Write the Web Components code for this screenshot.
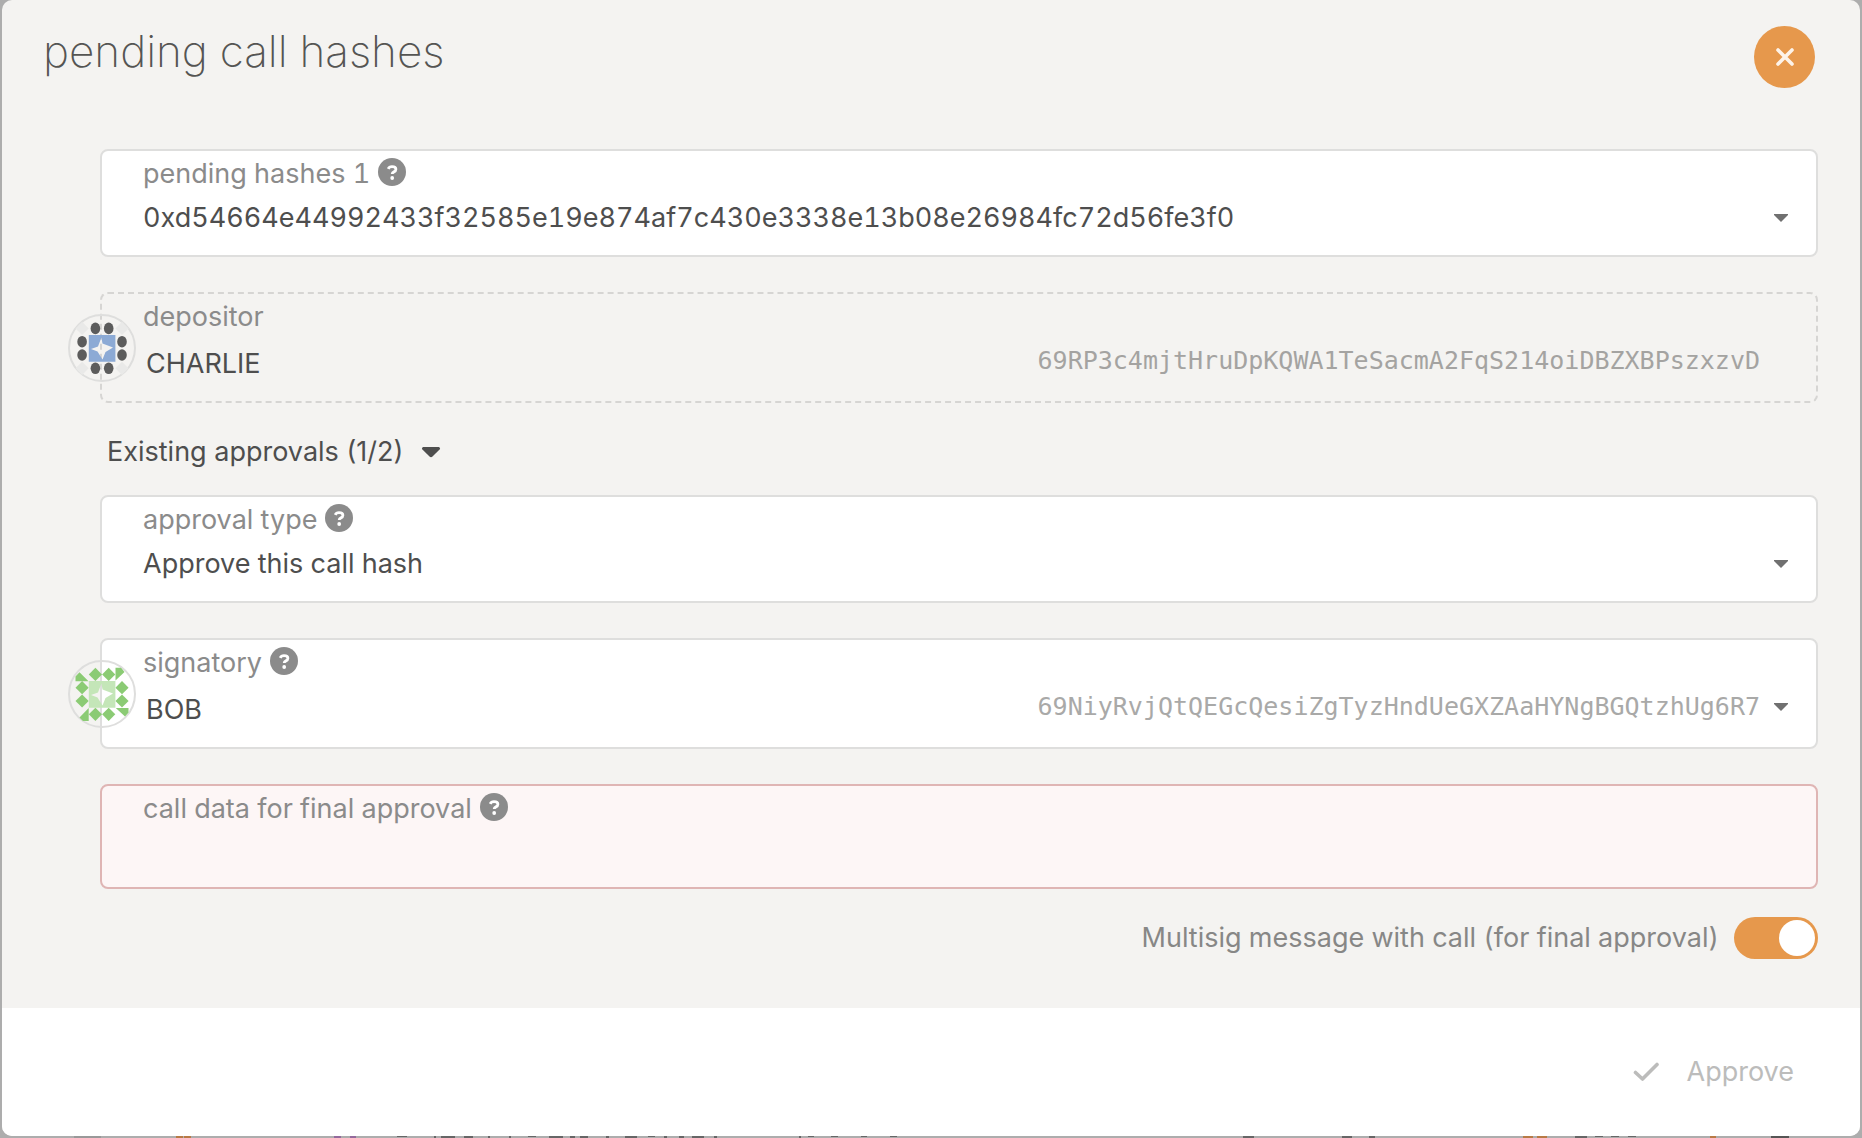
<!DOCTYPE html>
<html lang="en">
<head>
<meta charset="utf-8">
<title>pending call hashes</title>
<style>
html, body { margin: 0; min-height: 100%; }
body { background: #adadad; font-family: Inter, "Liberation Sans", sans-serif; font-size: 27px; line-height: 40px; font-variant-numeric: tabular-nums; color: #4e4e4e; }
</style>
</head>
<body>
<call-modal></call-modal>

<template id="t-modal">
  <style>
    :host { display: flex; flex-direction: column; min-height: 100vh; }
    dialog { all: unset; box-sizing: border-box; display: flex; flex-direction: column; flex: 1; margin: 0 2px; border-radius: 10px; overflow: hidden; background: #f4f3f1; }
    header { display: flex; justify-content: space-between; align-items: flex-start; padding: 26px 45px 0 41px; height: 123px; box-sizing: border-box; }
    h1 { margin: 0; font-size: 44px; line-height: 50px; font-weight: 200; color: #555553; }
    main { flex: 1; display: flex; flex-direction: column; gap: 35px; padding: 26px 42px 43px 98px; }
    details { margin: 0 0 0 7px; line-height: 40px; height: 22px; }
    summary { list-style: none; display: flex; align-items: center; gap: 18px; margin-top: -6px; font-variant-numeric: normal; }
    summary svg { width: 20px; height: 12px; }
    footer { background: #fff; display: flex; justify-content: flex-end; padding: 44px 66px; }
    .stack { display: flex; flex-direction: column; gap: 22px; }
  </style>
  <dialog open aria-labelledby="title">
    <header>
      <h1 id="title">pending call hashes</h1>
      <close-button></close-button>
    </header>
    <main>
      <form-field label="pending hashes 1" help control="select" value="0xd54664e44992433f32585e19e874af7c430e3338e13b08e26984fc72d56fe3f0"></form-field>
      <form-field label="depositor" control="output" kind="account" value="CHARLIE" address="69RP3c4mjtHruDpKQWA1TeSacmA2FqS214oiDBZXBPszxzvD">
        <identity-icon slot="icon" pattern="dots"></identity-icon>
      </form-field>
      <details>
        <summary>Existing approvals (1/2)
          <svg viewBox="0 0 20 12" aria-hidden="true"><path d="M2 1h16q2 1 .6 2.600L11.500 10.500q-1.500 1.300-3 0L1.400 3.600Q0 2 2 1z" fill="#4e4e4e"/></svg>
        </summary>
      </details>
      <form-field label="approval type" help control="select" value="Approve this call hash"></form-field>
      <form-field label="signatory" help control="select" kind="account" value="BOB" address="69NiyRvjQtQEGcQesiZgTyzHndUeGXZAaHYNgBGQtzhUg6R7">
        <identity-icon slot="icon" pattern="diamonds"></identity-icon>
      </form-field>
      <div class="stack">
        <form-field label="call data for final approval" help control="input" kind="error" value=""></form-field>
        <toggle-switch>Multisig message with call (for final approval)</toggle-switch>
      </div>
    </main>
    <footer><approve-button>Approve</approve-button></footer>
  </dialog>
  <page-behind></page-behind>
</template>

<template id="t-close">
  <style>
    :host { display: block; }
    button { display: grid; place-items: center; width: 61px; height: 62px; padding: 0; border: 0; border-radius: 50%; background: #e6984c; cursor: pointer; }
    svg { width: 20px; height: 20px; }
  </style>
  <button type="button" aria-label="Close"><svg viewBox="0 0 20 20"><path d="M3 3L17 17M17 3L3 17" stroke="#fdf3e9" stroke-width="3.600" stroke-linecap="round"/></svg></button>
</template>

<template id="t-field">
  <style>
    :host { display: block; }
    .box { position: relative; box-sizing: border-box; height: 108px; border: 2px solid #dededd; border-radius: 8px; background: #fff; padding: 2px 0 0 41px; }
    .head { display: flex; align-items: center; gap: 8px; height: 42px; color: #8b8b8b; }
    .head svg { width: 28px; height: 28px; margin-bottom: 4px; }
    .row { display: flex; align-items: center; height: 46px; padding-right: 28px; }
    select, input, output { flex: 1; min-width: 0; height: 40px; padding: 0; border: 0; outline: 0; background: none; appearance: none; font: inherit; font-variant-numeric: inherit; color: #4e4e4e; line-height: 40px; opacity: 1; }
    .arrow { width: 14px; height: 8px; margin-left: 14px; }
    code { font-family: "DejaVu Sans Mono", monospace; font-size: 25px; color: #a9a9a8; }
    :host([kind="account"]) .box { height: 111px; }
    :host([kind="account"]) .row { padding-left: 3px; height: 52px; }
    :host([kind="account"]) code, :host([kind="account"]) .arrow { margin-bottom: 6px; }
    :host([control="output"]) .box { background: none; border: 2px dashed #d6d5d3; }
    :host([control="output"]) .row { padding-right: 56px; }
    :host([control="output"]) code { color: #a4a3a1; }
    :host([kind="error"]) .box { height: 105px; background: #fdf6f6; border-color: #dfb5b4; }
    ::slotted(*) { position: absolute; left: -34px; top: 20px; }
  </style>
  <div class="box">
    <slot name="icon"></slot>
    <div class="head"><label for="control"></label></div>
    <div class="row"></div>
  </div>
</template>

<template id="t-toggle">
  <style>
    :host { display: block; }
    label { display: flex; justify-content: flex-end; align-items: center; gap: 15px; height: 54px; color: #878786; }
    input { appearance: none; margin: 0; box-sizing: border-box; width: 84px; height: 42px; padding: 3px; border-radius: 21px; background: #e6984c; display: flex; justify-content: flex-end; }
    input::before { content: ""; width: 36px; height: 36px; border-radius: 50%; background: #fff; }
  </style>
  <label><slot></slot><input type="checkbox" checked></label>
</template>

<template id="t-approve">
  <style>
    :host { display: block; }
    button { display: flex; align-items: center; gap: 28px; border: 0; padding: 0; background: none; font: inherit; color: #bcbcbb; line-height: 40px; }
    svg { width: 26px; height: 22px; }
  </style>
  <button type="button" disabled><svg viewBox="0 0 26 22" fill="none"><path d="M2.500 11.500L9.500 18L24 3.500" stroke="#bcbcbb" stroke-width="3.600" stroke-linecap="round" stroke-linejoin="round"/></svg><slot></slot></button>
</template>

<template id="t-behind">
  <style>
    :host { display: block; height: 2px; }
    svg { display: block; width: 100%; height: 2px; }
  </style>
  <svg viewBox="0 0 1862 2" preserveAspectRatio="none" aria-hidden="true">
    <path d="M74 0h27v2h-27z" fill="#999"/>
    <path d="M397 0h10v1h-10zM434 0h2v2h-2zM441 0h14v2h-14zM464 0h9v2h-9zM488 0h2v2h-2zM509 0h2v2h-2zM528 0h8v1h-8zM549 0h14v2h-14zM570 0h5v2h-5zM580 0h8v2h-8zM606 0h3v2h-3zM625 0h12v2h-12zM648 0h7v1h-7zM664 0h3v2h-3zM679 0h5v2h-5zM692 0h12v2h-12zM714 0h3v2h-3zM799 0h2v2h-2zM808 0h6v1h-6zM831 0h7v1h-7zM861 0h6v1h-6zM890 0h7v1h-7zM1243 0h11v2h-11zM1342 0h10v2h-10zM1369 0h6v2h-6zM1575 0h12v2h-12zM1595 0h8v1h-8zM1611 0h8v1h-8zM1628 0h8v1h-8z" fill="#666"/>
    <path d="M1771 0h18v2h-18z" fill="#555"/>
    <path d="M176 0h7v2h-7zM184 0h7v2h-7zM1523 0h10v2h-10zM1537 0h10v2h-10zM1710 0h6v2h-6z" fill="#b87a45"/>
    <path d="M334 0h7v2h-7zM350 0h6v2h-6z" fill="#936a9c"/>
  </svg>
</template>

<script>
const stamp = (el, id) => {
  const root = el.attachShadow({ mode: 'open' });
  root.append(document.getElementById(id).content.cloneNode(true));
  return root;
};
const HELP = '<svg viewBox="0 0 28 28" role="img" aria-label="help"><circle cx="14" cy="14" r="14" fill="#8b8b8b"/><path d="M10.200 10.800Q11.200 8.600 14 8.600Q17.900 8.600 17.900 11.300Q17.900 13 15.900 13.900Q14.200 14.700 14.200 16.100" fill="none" stroke="#fff" stroke-width="2.800"/><circle cx="14.200" cy="20" r="1.900" fill="#fff"/></svg>';
const ARROW = '<svg class="arrow" viewBox="0 0 14 8" aria-hidden="true"><path d="M0 0H14V1L7 8L0 1Z" fill="#707070"/></svg>';

customElements.define('close-button', class extends HTMLElement {
  constructor() { super(); stamp(this, 't-close'); }
});
customElements.define('toggle-switch', class extends HTMLElement {
  constructor() { super(); stamp(this, 't-toggle'); }
});
customElements.define('approve-button', class extends HTMLElement {
  constructor() { super(); stamp(this, 't-approve'); }
});
customElements.define('page-behind', class extends HTMLElement {
  constructor() { super(); stamp(this, 't-behind'); }
});
customElements.define('identity-icon', class extends HTMLElement {
  connectedCallback() {
    if (this.shadowRoot) return;
    const dots = this.getAttribute('pattern') === 'dots';
    const cells = [[27.4, 14.4], [40.7, 14.4], [14.1, 27.7], [54, 27.7], [14.1, 41], [54, 41], [27.4, 54.3], [40.7, 54.3]];
    const diamond = (x, y, c) => `<path d="M${x} ${y - 6.6}l6.600 6.600l-6.600 6.600l-6.600-6.600z" fill="${c}"/>`;
    let art = cells.map(([x, y]) => dots ? `<ellipse cx="${x}" cy="${y}" rx="4.800" ry="5.800" fill="#5c5c5c"/>` : diamond(x, y, '#8bcb74')).join('');
    art += dots
      ? [[14.1, 14.4], [54, 14.4], [14.1, 54.3], [54, 54.3]].map(([x, y]) => diamond(x, y, '#e9e9e8')).join('')
      : '<path d="M7.500 21.200V16.500L11.500 12.200L20.500 21.200zM47.500 7.800H53L56.500 12L47.500 20.600zM47.800 48H60.500V52.500L57 56.500zM20.700 48V61H15L11.500 57.500z" fill="#8bcb74"/>';
    art += `<path fill-rule="evenodd" d="M20.800 21.100H47.400V47.700H20.800ZM33.400 23.500L30 32.500L23 35L29.500 37.500L34.500 45.500L37.500 38L45 33.500L34.500 29.500Z" fill="${dots ? '#8caad5' : '#c4e6b8'}"/>`;
    this.attachShadow({ mode: 'open' }).innerHTML = `<style>:host{display:block;width:68px;height:68px}svg{display:block}</style><svg width="68" height="68" viewBox="0 0 68 68" aria-hidden="true"><circle cx="34" cy="34" r="33" fill="none" stroke="#dededd" stroke-width="2"/>${art}</svg>`;
  }
});
customElements.define('form-field', class extends HTMLElement {
  connectedCallback() {
    if (this.shadowRoot) return;
    const root = stamp(this, 't-field');
    const at = n => this.getAttribute(n);
    root.querySelector('label').textContent = at('label');
    if (this.hasAttribute('help')) root.querySelector('.head').insertAdjacentHTML('beforeend', HELP);
    const control = document.createElement(at('control'));
    control.id = 'control';
    if (at('control') === 'select') control.add(new Option(at('value')));
    else if (at('control') === 'input') control.type = 'text';
    else control.textContent = at('value');
    const row = root.querySelector('.row');
    row.append(control);
    if (this.hasAttribute('address')) {
      const code = document.createElement('code');
      code.textContent = at('address');
      row.append(code);
    }
    if (at('control') === 'select') row.insertAdjacentHTML('beforeend', ARROW);
  }
});
customElements.define('call-modal', class extends HTMLElement {
  constructor() { super(); stamp(this, 't-modal'); }
});
</script>
</body>
</html>
